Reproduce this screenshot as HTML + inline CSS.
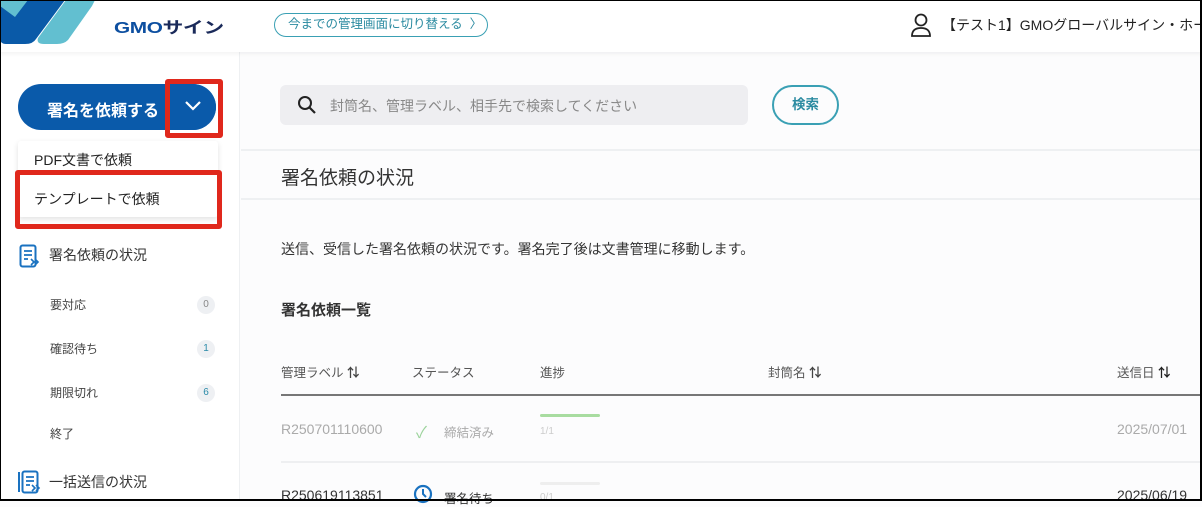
<!DOCTYPE html>
<html><head><meta charset="utf-8"><style>
*{margin:0;padding:0;box-sizing:border-box}
body{width:1202px;height:501px;overflow:hidden;background:#fcfcfd;font-family:"Liberation Sans","Noto Sans CJK JP",sans-serif;color:#333;position:relative}
.a{position:absolute;white-space:nowrap}
.frame{position:absolute;left:0;top:0;width:1202px;height:501px;border:1px solid #000;border-right:2px solid #000;border-bottom:2px solid #000;z-index:50;pointer-events:none}
.hdr{position:absolute;left:0;top:0;width:1202px;height:52px;background:#fff;box-shadow:0 2px 4px rgba(0,0,0,.05);z-index:5}
.side{position:absolute;left:0;top:52px;width:240px;height:449px;background:#fff;border-right:1px solid #eef0f2}
.badge{position:absolute;left:197px;width:18px;height:18px;border-radius:9px;background:#eef0f3;font-size:10px;text-align:center;line-height:18px}
.red{position:absolute;border:5px solid #e0281c;border-radius:3px;z-index:10}
</style></head><body>
<div class="hdr">
<svg class="a" style="left:0;top:0" width="100" height="48" viewBox="0 0 100 48">
<path d="M0 0 L30 0 L15 20 L0 20 Z" fill="#62bfd0"/>
<path d="M66 0 L95 0 L92 6 L68 40 Q64 44 57 44 L44 44 Q36 44 38 38 Z" fill="#62bfd0"/>
<path d="M0 6 L15 17 L28 0 L65 0 L36 39 Q33 44 25 44 L6 44 Q0 44 0 38 Z" fill="#0a5aa8"/>
</svg>
<div class="a" style="left:114px;top:14px;font-size:16px;font-weight:bold;color:#0d4fa0;letter-spacing:-0.3px;transform:scaleX(1.3);transform-origin:left">GMO<span style="color:#1a2a5a">サイン</span></div>
<div class="a" style="left:274px;top:13px;width:214px;height:24px;border:1.5px solid #3aa0b4;border-radius:12px;font-size:12.5px;color:#2a8aa0;line-height:21px;padding-left:13px">今までの管理画面に切り替える &nbsp;〉</div>
<svg class="a" style="left:910px;top:13px" width="22" height="25" viewBox="0 0 22 25"><circle cx="11" cy="7" r="5.5" fill="none" stroke="#222" stroke-width="1.8"/><path d="M2 23 Q2 15 11 15 Q20 15 20 23 Z" fill="none" stroke="#222" stroke-width="1.8"/></svg>
<div class="a" style="left:942px;top:15px;font-size:14px;color:#222">【テスト1】GMOグローバルサイン・ホー</div>
</div>
<div class="side">
<div class="a" style="left:18px;top:32px;width:198px;height:46px;border-radius:23px;background:#0a5aaa"></div>
<div class="a" style="left:47px;top:45px;font-size:16px;font-weight:bold;color:#fff">署名を依頼する</div>
<div class="a" style="left:172px;top:32px;width:44px;height:46px;background:#0a5aaa;border-radius:0 23px 23px 0"></div>
<svg class="a" style="left:184px;top:48px" width="18" height="12" viewBox="0 0 18 12"><path d="M2 2 L9 9 L16 2" fill="none" stroke="#fff" stroke-width="2.2"/></svg>
<div class="a" style="left:18px;top:89px;width:200px;height:76px;background:#fff;box-shadow:0 2px 6px rgba(0,0,0,.12);border-radius:3px"></div>
<div class="a" style="left:34px;top:98px;font-size:14px;color:#222">PDF文書で依頼</div>
<div class="a" style="left:34px;top:137px;font-size:14px;color:#222">テンプレートで依頼</div>
<svg class="a" style="left:19px;top:192px" width="22" height="24" viewBox="0 0 22 24"><rect x="1.5" y="1.5" width="15" height="21" rx="2" fill="none" stroke="#1a72c0" stroke-width="2"/><path d="M5 7h8M5 11h8M5 15h4" stroke="#1a72c0" stroke-width="1.8"/><path d="M12 15l3 3-3 3M16 15l3 3-3 3" fill="none" stroke="#1a72c0" stroke-width="1.6"/></svg>
<div class="a" style="left:49px;top:193px;font-size:14px;color:#333">署名依頼の状況</div>
<div class="a" style="left:50px;top:244px;font-size:12px;color:#444">要対応</div><div class="badge" style="top:244px;color:#888">0</div>
<div class="a" style="left:50px;top:288px;font-size:12px;color:#444">確認待ち</div><div class="badge" style="top:288px;color:#2a8aa8">1</div>
<div class="a" style="left:50px;top:332px;font-size:12px;color:#444">期限切れ</div><div class="badge" style="top:332px;color:#2a8aa8">6</div>
<div class="a" style="left:50px;top:373px;font-size:12px;color:#444">終了</div>
<svg class="a" style="left:17px;top:418px" width="24" height="24" viewBox="0 0 24 24"><path d="M2 2v20" stroke="#1a72c0" stroke-width="2"/><rect x="5.5" y="1.5" width="15" height="21" rx="2" fill="none" stroke="#1a72c0" stroke-width="2"/><path d="M9 7h8M9 11h8M9 15h4" stroke="#1a72c0" stroke-width="1.8"/><path d="M15 15l3 3-3 3M19 15l3 3-3 3" fill="none" stroke="#1a72c0" stroke-width="1.6"/></svg>
<div class="a" style="left:49px;top:420px;font-size:14px;color:#333">一括送信の状況</div>
</div>
<div class="red" style="left:165px;top:79px;width:58px;height:59px"></div>
<div class="red" style="left:15px;top:170px;width:207px;height:59px"></div>
<div class="a" style="left:280px;top:85px;width:468px;height:40px;background:#eeeef1;border-radius:6px"></div>
<svg class="a" style="left:297px;top:95px" width="20" height="20" viewBox="0 0 20 20"><circle cx="8" cy="8" r="6" fill="none" stroke="#222" stroke-width="2"/><path d="M12.5 12.5l5.5 5.5" stroke="#222" stroke-width="2.2"/></svg>
<div class="a" style="left:330px;top:96px;font-size:14px;color:#888">封筒名、管理ラベル、相手先で検索してください</div>
<div class="a" style="left:772px;top:85px;width:67px;height:40px;border:2px solid #3aa0b4;border-radius:20px;text-align:center;line-height:36px;font-size:13.5px;font-weight:bold;color:#2a8aa0">検索</div>
<div class="a" style="left:241px;top:149px;width:961px;height:2px;background:#eef0f2"></div>
<div class="a" style="left:281px;top:163px;font-size:19px;color:#333">署名依頼の状況</div>
<div class="a" style="left:241px;top:198px;width:961px;height:2px;background:#eef0f2"></div>
<div class="a" style="left:281px;top:239px;font-size:14px;color:#333">送信、受信した署名依頼の状況です。署名完了後は文書管理に移動します。</div>
<div class="a" style="left:281px;top:299px;font-size:15px;font-weight:bold;color:#333">署名依頼一覧</div>
<div class="a" style="left:281px;top:362px;font-size:12.5px;color:#555">管理ラベル <b style="color:#444">⇅</b></div>
<div class="a" style="left:412px;top:362px;font-size:12.5px;color:#555">ステータス</div>
<div class="a" style="left:540px;top:362px;font-size:12.5px;color:#555">進捗</div>
<div class="a" style="left:768px;top:362px;font-size:12.5px;color:#555">封筒名 <b style="color:#444">⇅</b></div>
<div class="a" style="left:1117px;top:362px;font-size:12.5px;color:#555">送信日 <b style="color:#222">⇅</b></div>
<div class="a" style="left:281px;top:394px;width:921px;height:2px;background:#777"></div>
<div class="a" style="left:281px;top:421px;font-size:14px;color:#aaa">R250701110600</div>
<div class="a" style="left:416px;top:419px;font-size:16px;color:#9cd39c">✓</div>
<div class="a" style="left:444px;top:422px;font-size:12.5px;color:#aaa">締結済み</div>
<div class="a" style="left:540px;top:414px;width:60px;height:3px;background:#a8dca0;border-radius:2px"></div>
<div class="a" style="left:540px;top:426px;font-size:10px;color:#ccc">1/1</div>
<div class="a" style="left:1117px;top:421px;font-size:14px;color:#aaa">2025/07/01</div>
<div class="a" style="left:281px;top:461px;width:921px;height:2px;background:#eeeff1"></div>
<div class="a" style="left:281px;top:487px;font-size:14px;color:#333">R250619113851</div>
<svg class="a" style="left:413px;top:483px" width="24" height="24" viewBox="0 0 24 24"><circle cx="10" cy="11" r="8" fill="none" stroke="#1a72c0" stroke-width="2.2"/><path d="M10 6v5l3 3" fill="none" stroke="#1a72c0" stroke-width="2"/></svg>
<div class="a" style="left:444px;top:488px;font-size:12.5px;color:#333">署名待ち</div>
<div class="a" style="left:540px;top:482px;width:60px;height:3px;background:#eee;border-radius:2px"></div>
<div class="a" style="left:540px;top:492px;font-size:10px;color:#ccc">0/1</div>
<div class="a" style="left:1117px;top:487px;font-size:14px;color:#333">2025/06/19</div>
<div class="frame"></div>
</body></html>
